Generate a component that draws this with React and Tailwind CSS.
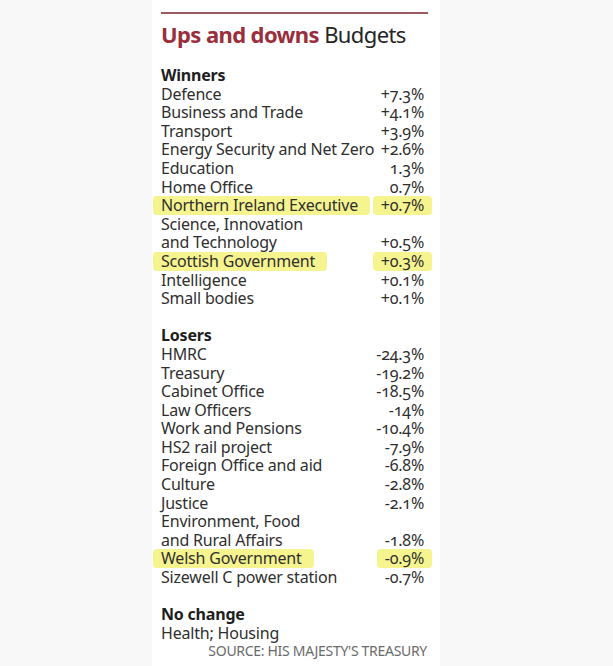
const winners = [
  ['Defence', '+7.3%'],
  ['Business and Trade', '+4.1%'],
  ['Transport', '+3.9%'],
  ['Energy Security and Net Zero', '+2.6%'],
  ['Education', '1.3%'],
  ['Home Office', '0.7%'],
  ['Northern Ireland Executive', '+0.7%', true],
  ['Science, Innovation', ''],
  ['and Technology', '+0.5%'],
  ['Scottish Government', '+0.3%', true],
  ['Intelligence', '+0.1%'],
  ['Small bodies', '+0.1%'],
];

const losers = [
  ['HMRC', '-24.3%'],
  ['Treasury', '-19.2%'],
  ['Cabinet Office', '-18.5%'],
  ['Law Officers', '-14%'],
  ['Work and Pensions', '-10.4%'],
  ['HS2 rail project', '-7.9%'],
  ['Foreign Office and aid', '-6.8%'],
  ['Culture', '-2.8%'],
  ['Justice', '-2.1%'],
  ['Environment, Food', ''],
  ['and Rural Affairs', '-1.8%'],
  ['Welsh Government', '-0.9%', true],
  ['Sizewell C power station', '-0.7%'],
];

function Row({ name, value, hl }) {
  return (
    <div className="flex justify-between h-[18.6px] leading-[18.6px] items-center">
      <span className={hl ? 'bg-[#f6f48f] -ml-2 pl-2 pr-3 rounded-sm' : ''}>{name}</span>
      <span className={hl ? 'bg-[#f6f48f] -mr-2 pl-2 pr-2 rounded-sm oldstyle-nums' : 'oldstyle-nums'}>{value}</span>
    </div>
  );
}

export default function App() {
  return (
    <div className="w-[613px] h-[666px] bg-[#f8f8f8] pl-[152px] overflow-hidden">
      <div className="w-[288px] h-full bg-white pt-[12px] pl-[9px] pr-[16px] text-[#2f2f2f] text-[16px] tracking-[-0.2px] font-['Noto_Sans',sans-serif]">
        <div className="h-[2px] bg-[#9c5a60] mr-[-4px]" />
        <div className="mt-[6px] text-[22px] leading-[28px] tracking-[-0.6px]">
          <span className="font-bold text-[#9a2e3c]">Ups and downs</span>{' '}
          <span className="text-[#252525]">Budgets</span>
        </div>
        <div className="mt-[18px]">
          <div className="font-bold h-[18.6px] leading-[18.6px] text-[#1e1e1e]">Winners</div>
          {winners.map(([n, v, h]) => <Row key={n} name={n} value={v} hl={h} />)}
          <div className="h-[18.6px]" />
          <div className="font-bold h-[18.6px] leading-[18.6px] text-[#1e1e1e]">Losers</div>
          {losers.map(([n, v, h]) => <Row key={n} name={n} value={v} hl={h} />)}
          <div className="h-[18.6px]" />
          <div className="font-bold h-[18.6px] leading-[18.6px] text-[#1e1e1e]">No change</div>
          <div className="h-[18.6px] leading-[18.6px]">Health; Housing</div>
          <div className="h-[18.6px] leading-[18.6px] text-right text-[14px] text-[#6a6a6a] uppercase tracking-[-0.3px] mr-[-3px]">Source: His Majesty's Treasury</div>
        </div>
      </div>
    </div>
  );
}
